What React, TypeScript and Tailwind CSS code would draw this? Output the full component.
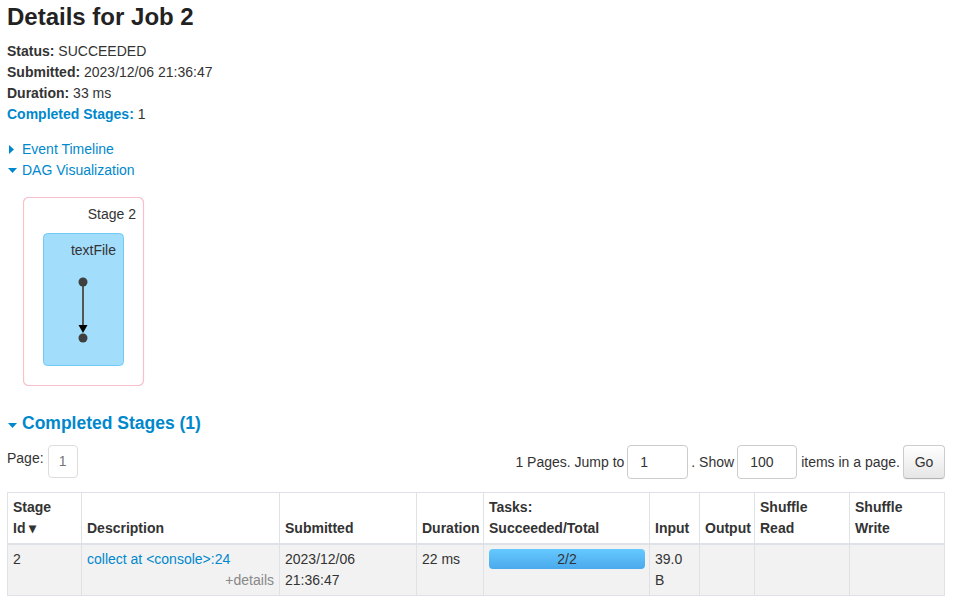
import React from "react";

function RightTri() {
  return (
    <svg width="5" height="9" viewBox="0 0 5 9" className="ml-[2px] mr-[8px] shrink-0">
      <polygon points="0,0 5,4.5 0,9" fill="#0088cc" />
    </svg>
  );
}

function DownTri({ extra = "" }: { extra?: string }) {
  return (
    <svg width="9" height="5" viewBox="0 0 9 5" className={"ml-[1px] mr-[5px] shrink-0 " + extra}>
      <polygon points="0,0 9,0 4.5,5" fill="#0088cc" />
    </svg>
  );
}

function Dag() {
  return (
    <svg width="122" height="190" viewBox="0 0 122 190" className="ml-[16px] mt-[16px] block">
      <rect x="0.5" y="0.5" width="120" height="188" rx="5" fill="#ffffff" stroke="#f9bfcb" strokeWidth="1.2" />
      <text x="113" y="22" textAnchor="end" fontFamily="Liberation Sans, Arial, sans-serif" fontSize="14" fill="#333">
        Stage 2
      </text>
      <rect x="20.5" y="36.5" width="80" height="132" rx="4" fill="#a3ddfc" stroke="#6fcbf6" strokeWidth="1" />
      <text x="93" y="58" textAnchor="end" fontFamily="Liberation Sans, Arial, sans-serif" fontSize="14" fill="#333">
        textFile
      </text>
      <line x1="60" y1="85" x2="60" y2="130" stroke="#555" strokeWidth="2" />
      <circle cx="60" cy="85" r="4.5" fill="#3f3f3f" />
      <circle cx="60" cy="141" r="4.5" fill="#3f3f3f" />
      <polygon points="55.5,128 64.5,128 60,136" fill="#000" />
    </svg>
  );
}

export default function App() {
  const th =
    "border border-[#dee2e6] border-b-2 px-[5px] pt-[4px] pb-[4px] text-left align-bottom font-bold leading-[21px] overflow-hidden";
  const td = "border border-[#dee2e6] px-[5px] py-[4px] align-top leading-[21px]";
  return (
    <div className="min-h-[610px] bg-white pl-[7px] pr-[12px] font-['Liberation_Sans',Arial,sans-serif] text-[14px] text-[#333]">
      <h3 className="pt-[2px] text-[24px] font-bold leading-[29px] text-[#222]">Details for Job 2</h3>
      <ul className="mt-[10px] leading-[21px]">
        <li>
          <strong>Status:</strong> SUCCEEDED
        </li>
        <li>
          <strong>Submitted:</strong> 2023/12/06 21:36:47
        </li>
        <li>
          <strong>Duration:</strong> 33 ms
        </li>
        <li>
          <a className="font-bold text-[#0088cc]">Completed Stages:</a> 1
        </li>
      </ul>
      <div className="mt-[14px] leading-[21px] text-[#0088cc]">
        <div className="flex items-center">
          <RightTri />
          <span>Event Timeline</span>
        </div>
        <div className="flex items-center">
          <DownTri />
          <span>DAG Visualization</span>
        </div>
      </div>
      <Dag />
      <h4 className="mt-[26px] flex items-center text-[17.5px] font-bold leading-[21px] text-[#0088cc]">
        <DownTri extra="mt-[3px]" />
        <span>Completed Stages (1)</span>
      </h4>
      <div className="mt-[11px] flex justify-between">
        <div className="flex items-start">
          <span className="pt-[3px] leading-[21px]">Page:</span>
          <span className="ml-[4px] flex h-[33px] w-[30px] items-center justify-center rounded-[4px] border border-[#dddddd] text-[#777]">
            1
          </span>
        </div>
        <div className="flex items-center gap-[3px]">
          <span className="leading-[21px]">1 Pages. Jump to</span>
          <input
            readOnly
            defaultValue="1"
            className="h-[34px] w-[61px] rounded-[4px] border border-[#cccccc] bg-white px-[12px] text-[14px] text-[#333] outline-none"
          />
          <span className="leading-[21px]">. Show</span>
          <input
            readOnly
            defaultValue="100"
            className="h-[34px] w-[60px] rounded-[4px] border border-[#cccccc] bg-white px-[12px] text-[14px] text-[#333] outline-none"
          />
          <span className="ml-[1px] leading-[21px]">items in a page.</span>
          <button className="h-[34px] w-[42px] rounded-[4px] border border-[#cccccc] border-b-[#b3b3b3] bg-gradient-to-b from-white to-[#e6e6e6] text-[14px] text-[#333] shadow-[0_1px_1px_rgba(0,0,0,0.05)]">
            Go
          </button>
        </div>
      </div>
      <table className="mt-[13px] w-[937px] table-fixed border-collapse">
        <colgroup>
          <col className="w-[74px]" />
          <col className="w-[198px]" />
          <col className="w-[137px]" />
          <col className="w-[67px]" />
          <col className="w-[166px]" />
          <col className="w-[50px]" />
          <col className="w-[55px]" />
          <col className="w-[95px]" />
          <col className="w-[95px]" />
        </colgroup>
        <thead>
          <tr className="bg-white">
            <th className={th}>
              Stage
              <br />
              Id ▾
            </th>
            <th className={th}>Description</th>
            <th className={th}>Submitted</th>
            <th className={th}>Duration</th>
            <th className={th}>
              Tasks:
              <br />
              Succeeded/Total
            </th>
            <th className={th}>Input</th>
            <th className={th + " overflow-visible"}>Output</th>
            <th className={th}>
              Shuffle
              <br />
              Read
            </th>
            <th className={th}>
              Shuffle
              <br />
              Write
            </th>
          </tr>
        </thead>
        <tbody>
          <tr className="bg-[#f2f2f2]">
            <td className={td}>2</td>
            <td className={td}>
              <a className="text-[#0088cc]">collect at &lt;console&gt;:24</a>
              <div className="text-right text-[#888]">+details</div>
            </td>
            <td className={td}>
              2023/12/06
              <br />
              21:36:47
            </td>
            <td className={td}>22 ms</td>
            <td className={td + " pr-[4px]"}>
              <div className="flex h-[20px] items-center justify-center rounded-[4px] bg-gradient-to-b from-[#66c9ff] to-[#4aa9ec] leading-[20px] text-[#333]">
                2/2
              </div>
            </td>
            <td className={td}>39.0 B</td>
            <td className={td}></td>
            <td className={td}></td>
            <td className={td}></td>
          </tr>
        </tbody>
      </table>
    </div>
  );
}
